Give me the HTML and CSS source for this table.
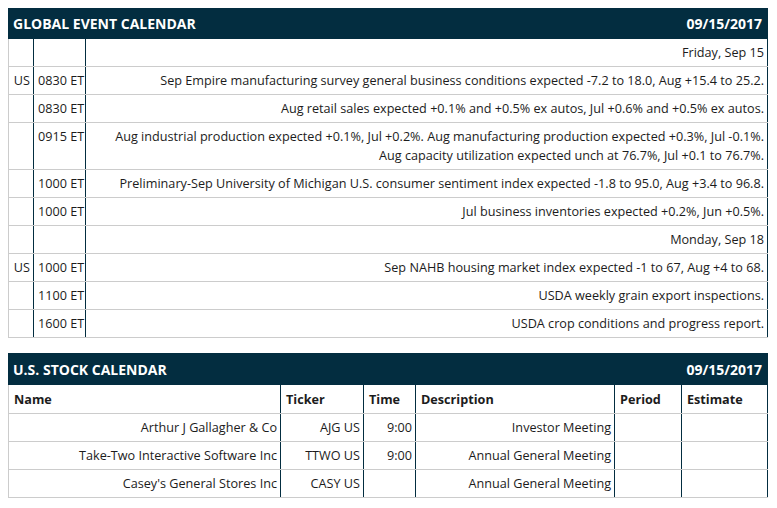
FILE: index.html
```html
<!DOCTYPE html>
<html>
<head>
<meta charset="utf-8">
<link rel="stylesheet" href="styles.css">
</head>
<body>
<section class="panel">
  <div class="panel-head"><span>GLOBAL EVENT CALENDAR</span><span>09/15/2017</span></div>
  <table class="grid events">
    <colgroup><col class="c-cty"><col class="c-time"><col></colgroup>
    <tbody>
      <tr><td></td><td></td><td>Friday, Sep 15</td></tr>
      <tr><td>US</td><td>0830 ET</td><td>Sep Empire manufacturing survey general business conditions expected -7.2 to 18.0, Aug +15.4 to 25.2.</td></tr>
      <tr><td></td><td>0830 ET</td><td>Aug retail sales expected +0.1% and +0.5% ex autos, Jul +0.6% and +0.5% ex autos.</td></tr>
      <tr><td></td><td class="top">0915 ET</td><td>Aug industrial production expected +0.1%, Jul +0.2%. Aug manufacturing production expected +0.3%, Jul -0.1%.<br>Aug capacity utilization expected unch at 76.7%, Jul +0.1 to 76.7%.</td></tr>
      <tr><td></td><td>1000 ET</td><td>Preliminary-Sep University of Michigan U.S. consumer sentiment index expected -1.8 to 95.0, Aug +3.4 to 96.8.</td></tr>
      <tr><td></td><td>1000 ET</td><td>Jul business inventories expected +0.2%, Jun +0.5%.</td></tr>
      <tr><td></td><td></td><td>Monday, Sep 18</td></tr>
      <tr><td>US</td><td>1000 ET</td><td>Sep NAHB housing market index expected -1 to 67, Aug +4 to 68.</td></tr>
      <tr><td></td><td>1100 ET</td><td>USDA weekly grain export inspections.</td></tr>
      <tr><td></td><td>1600 ET</td><td>USDA crop conditions and progress report.</td></tr>
    </tbody>
  </table>
</section>
<section class="panel second">
  <div class="panel-head tall"><span>U.S. STOCK CALENDAR</span><span>09/15/2017</span></div>
  <table class="grid stocks">
    <colgroup><col class="s-name"><col class="s-tick"><col class="s-time"><col class="s-desc"><col class="s-per"><col></colgroup>
    <thead>
      <tr><th>Name</th><th>Ticker</th><th>Time</th><th>Description</th><th>Period</th><th>Estimate</th></tr>
    </thead>
    <tbody>
      <tr><td>Arthur J Gallagher &amp; Co</td><td>AJG US</td><td>9:00</td><td>Investor Meeting</td><td></td><td></td></tr>
      <tr><td>Take-Two Interactive Software Inc</td><td>TTWO US</td><td>9:00</td><td>Annual General Meeting</td><td></td><td></td></tr>
      <tr><td>Casey's General Stores Inc</td><td>CASY US</td><td></td><td>Annual General Meeting</td><td></td><td></td></tr>
    </tbody>
  </table>
</section>
</body>
</html>
```

FILE: styles.css
```css
html, body {
  margin: 0;
  padding: 0;
  background: #ffffff;
}
body {
  padding: 8px 9px 8px 8px;
  font-family: "Open Sans", "Liberation Sans", sans-serif;
  font-size: 12.65px;
  color: #1c1c1c;
}
.panel {
  width: 760px;
}
.panel.second {
  margin-top: 15px;
}
.panel-head {
  display: flex;
  justify-content: space-between;
  align-items: center;
  height: 31px;
  padding: 0 6px 0 5px;
  background: #032d40;
  color: #ffffff;
  font-weight: 700;
  font-size: 14px;
}
.panel-head.tall {
  height: 32px;
}
.grid {
  width: 760px;
  border-collapse: collapse;
  table-layout: fixed;
}
.grid td, .grid th {
  border-left: 1px solid #032d40;
  border-right: 1px solid #032d40;
  border-bottom: 1px solid #cccccc;
  padding: 4px 3px 4px 4px;
  line-height: 19px;
  text-align: right;
  vertical-align: top;
  white-space: nowrap;
  overflow: hidden;
}
.grid td:first-child, .grid th:first-child {
  border-left: 1px solid #cccccc;
}
.grid th {
  text-align: left;
  font-weight: 700;
  padding: 5px 3px 4px 5px;
}
.c-cty { width: 25px; }
.c-time { width: 52px; }
.s-name { width: 272px; }
.s-tick { width: 83px; }
.s-time { width: 52px; }
.s-desc { width: 199px; }
.s-per { width: 67px; }
```
